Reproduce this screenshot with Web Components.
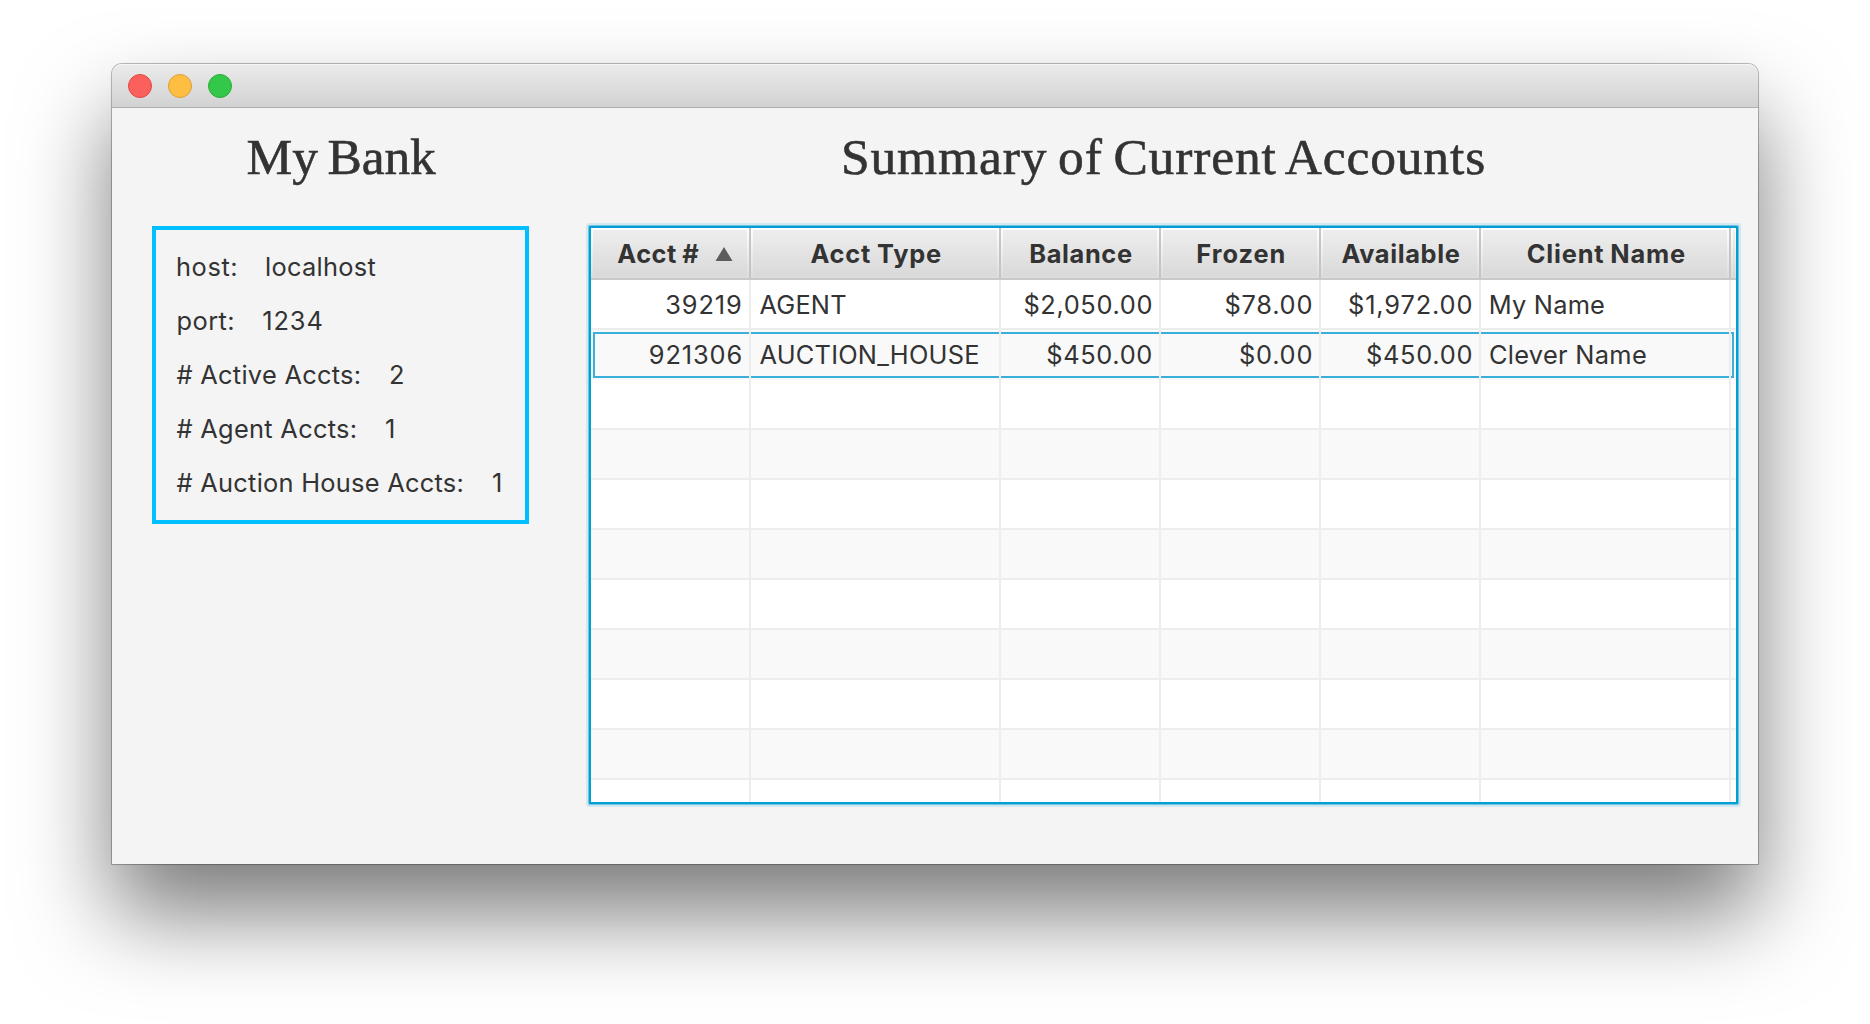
<!DOCTYPE html>
<html lang="en">
<head>
<meta charset="utf-8">
<title>My Bank</title>
<style>
html,body{margin:0;height:100%;background:#fff;overflow:hidden}
body{display:flex;justify-content:center;align-items:flex-start;padding-top:64px;box-sizing:border-box;color:#333}
</style>
</head>
<body>
<mac-window>
  <bank-panel slot="side"></bank-panel>
  <accounts-panel slot="main"></accounts-panel>
</mac-window>
<script>
const pen = document.createElement('canvas').getContext('2d');

// Text whose visible ink starts at its box edge and is tracked to span the `ink` width.
class InkText extends HTMLElement {
  connectedCallback() {
    const text = this.getAttribute('text');
    const ink = +this.getAttribute('ink');
    const kind = this.getAttribute('kind') || 'body';
    const style = {
      body: ['normal', 25.4, 'Inter', 0],
      bold: ['bold', 25.4, 'Inter', -1],
      title: ['normal', 51.5, 'Liberation Serif', -3]
    }[kind];
    const root = this.attachShadow({mode: 'open'});
    pen.font = `${style[0]} ${style[1]}px "${style[2]}"`;
    const m = pen.measureText(text);
    const natural = m.actualBoundingBoxLeft + m.actualBoundingBoxRight + style[3] * (text.split(' ').length - 1);
    const track = text.length > 1 ? (ink - natural) / (text.length - 1) : 0;
    const stroke = kind === 'title' ? '-webkit-text-stroke:.6px #333;' : '';
    root.innerHTML = `<style>:host{display:block;width:${ink}px;flex:none;white-space:pre}
      span{margin-left:${m.actualBoundingBoxLeft}px;font:${style[0]} ${style[1]}px/var(--line,48px) "${style[2]}",${kind === 'title' ? 'serif' : 'sans-serif'};letter-spacing:${track}px;word-spacing:${style[3]}px;${stroke}display:block}</style><span></span>`;
    root.querySelector('span').textContent = text;
  }
}
customElements.define('ink-text', InkText);

class MacWindow extends HTMLElement {
  constructor() {
    super();
    this.attachShadow({mode: 'open'}).innerHTML = `<style>
      :host{display:flex;flex-direction:column;width:1646px;height:800px;background:#f4f4f4;border-radius:10px 10px 0 0;
        box-shadow:0 0 0 1px rgba(0,0,0,.22),0 0 2px rgba(0,0,0,.2),0 50px 90px rgba(0,0,0,.52)}
      header{display:flex;align-items:center;gap:16px;height:44px;box-sizing:border-box;padding:0 16px 0 16px;flex:none;
        background:linear-gradient(#ebebeb,#d2d2d2);border-bottom:1px solid #b0b0b0;border-radius:10px 10px 0 0;box-shadow:inset 0 1px #f5f5f5}
      i{width:24px;height:24px;border-radius:50%;box-sizing:border-box;border:1px solid}
      .r{background:#fc605c;border-color:#e04845}.y{background:#fdbe41;border-color:#dfa038}.g{background:#34c84a;border-color:#2dac35}
      main{display:flex;flex:1}
    </style>
    <header><i class="r"></i><i class="y"></i><i class="g"></i></header>
    <main><slot name="side"></slot><slot name="main"></slot></main>`;
  }
}
customElements.define('mac-window', MacWindow);

class BankPanel extends HTMLElement {
  constructor() {
    super();
    // label, label width, gap, value, value width, left inset
    const rows = [
      ['host:', 59.3, 29.7, 'localhost', 109.5, 0],
      ['port:', 55.6, 30, '1234', 58.3, .6],
      ['# Active Accts:', 183.3, 30.2, '2', 13.3, -.5],
      ['# Agent Accts:', 179.3, 30.2, '1', 9, -.5],
      ['# Auction House Accts:', 286, 30.5, '1', 9, -.5]
    ];
    this.attachShadow({mode: 'open'}).innerHTML = `<style>
      :host{display:flex;flex-direction:column;width:377px;margin-left:40px;flex:none}
      .t{--line:57px;display:flex;height:118px;padding:20px 0 0 95.5px;box-sizing:border-box}
      .b{border:4px solid #00bfff;padding:10px 0 10px 21px;--line:54px}
      .b div{display:flex;height:54px}
    </style>
    <div class="t"><ink-text kind="title" text="My Bank" ink="188.5"></ink-text></div>
    <div class="b">${rows.map(r => `<div style="gap:${r[2]}px;margin-left:${r[5]}px"><ink-text text="${r[0]}" ink="${r[1]}"></ink-text><ink-text text="${r[3]}" ink="${r[4]}"></ink-text></div>`).join('')}</div>`;
  }
}
customElements.define('bank-panel', BankPanel);

class AccountsTable extends HTMLElement {
  constructor() {
    super();
    const cols = [160, 250, 160, 160, 160, 250];
    const heads = [['Acct #', 82, 26.3], ['Acct Type', 130.7, 59.4], ['Balance', 101.6, 29.3], ['Frozen', 87.3, 36.3], ['Available', 118.3, 20.4], ['Client Name', 157.3, 46.7]];
    // text, ink width, left inset within the cell
    const data = [
      [['39219', 74.6, 75.3], ['AGENT', 86.8, 8.4], ['$2,050.00', 127, 23.4], ['$78.00', 86, 64.4], ['$1,972.00', 122.4, 28], ['My Name', 113.4, 9.7]],
      [['921306', 91.7, 58.8], ['AUCTION_HOUSE', 218.8, 8.4], ['$450.00', 104, 46.3], ['$0.00', 71.4, 79], ['$450.00', 104.4, 46], ['Clever Name', 156, 8.9]]
    ];
    const w = i => 'width:' + cols[i] + 'px';
    const cell = (c, i) => `<div class="c" style="${w(i)};padding-left:${c ? c[2] : 0}px">${c ? `<ink-text text="${c[0]}" ink="${c[1]}"></ink-text>` : ''}</div>`;
    let rows = '';
    for (let r = 0; r < 11; r++) {
      rows += `<div class="row${r % 2 ? ' odd' : ''}${r === 1 ? ' focus' : ''}">${cols.map((_, i) => cell(data[r] && data[r][i], i)).join('')}<div class="rest"></div></div>`;
    }
    this.attachShadow({mode: 'open'}).innerHTML = `<style>
      *{box-sizing:border-box}
      :host{display:flex;flex-direction:column;width:1149px;height:578px;box-sizing:border-box;overflow:hidden;background:#fff;
        border:2px solid #039ed3;box-shadow:0 0 0 1px #6fc4e4,0 0 0 3px #d3e7f0;border-radius:1px}
      .head{display:flex;height:52px;flex:none;border-bottom:2px solid #c8c8c8;--line:52px;background:linear-gradient(#fff,#dcdcdc)}
      .h{display:flex;align-items:flex-start;flex:none;height:50px;border-right:2px solid #c5c5c5;
        background:linear-gradient(#eeeeee,#d9d9d9) 2px 2px/calc(100% - 4px) calc(100% - 4px) no-repeat}
      .h svg{margin:19px 0 0 16px;display:block}
      .hr{flex:1;background:linear-gradient(#eeeeee,#d9d9d9) 2px 2px/2px 46px no-repeat}
      .row{display:flex;height:50px;flex:none;--line:50px;background:#fff;border-bottom:2px solid #ededed}
      .c{height:100%;flex:none;border-right:2px solid #ededed}
      .odd{background:#f9f9f9}
      .rest{flex:1}
      .focus{border-bottom:0;--line:50px}
      .focus .c,.focus .rest{height:50px;background:linear-gradient(#39afd9,#39afd9) 0 2px/100% 2px no-repeat,linear-gradient(#39afd9,#39afd9) 0 46px/100% 2px no-repeat}
      .focus .c:first-child{background:linear-gradient(#39afd9,#39afd9) 2px 2px/100% 2px no-repeat,linear-gradient(#39afd9,#39afd9) 2px 46px/100% 2px no-repeat,linear-gradient(#39afd9,#39afd9) 2px 2px/2px 46px no-repeat}
      .focus .rest{flex:none;width:3px;background-image:linear-gradient(#39afd9,#39afd9),linear-gradient(#39afd9,#39afd9);border-right:2px solid #39afd9;height:46px;margin-top:2px;background-position:0 0,0 44px}
    </style>
    <div class="head">${heads.map((h, i) => `<div class="h" style="${w(i)};padding-left:${h[2]}px"><ink-text kind="bold" text="${h[0]}" ink="${h[1]}"></ink-text>${i ? '' : '<svg width="18" height="14"><path d="M9 0L17.5 14H.5Z" fill="#5c5c5c"/></svg>'}</div>`).join('')}<div class="hr"></div></div>${rows}`;
  }
}
customElements.define('accounts-table', AccountsTable);

class AccountsPanel extends HTMLElement {
  constructor() {
    super();
    this.attachShadow({mode: 'open'}).innerHTML = `<style>
      :host{display:flex;flex-direction:column;margin-left:60px;flex:none}
      .t{--line:57px;display:flex;height:118px;padding:20px 0 0 255px;box-sizing:border-box}
    </style>
    <div class="t"><ink-text kind="title" text="Summary of Current Accounts" ink="643"></ink-text></div>
    <accounts-table></accounts-table>`;
  }
}
customElements.define('accounts-panel', AccountsPanel);
</script>
</body>
</html>
